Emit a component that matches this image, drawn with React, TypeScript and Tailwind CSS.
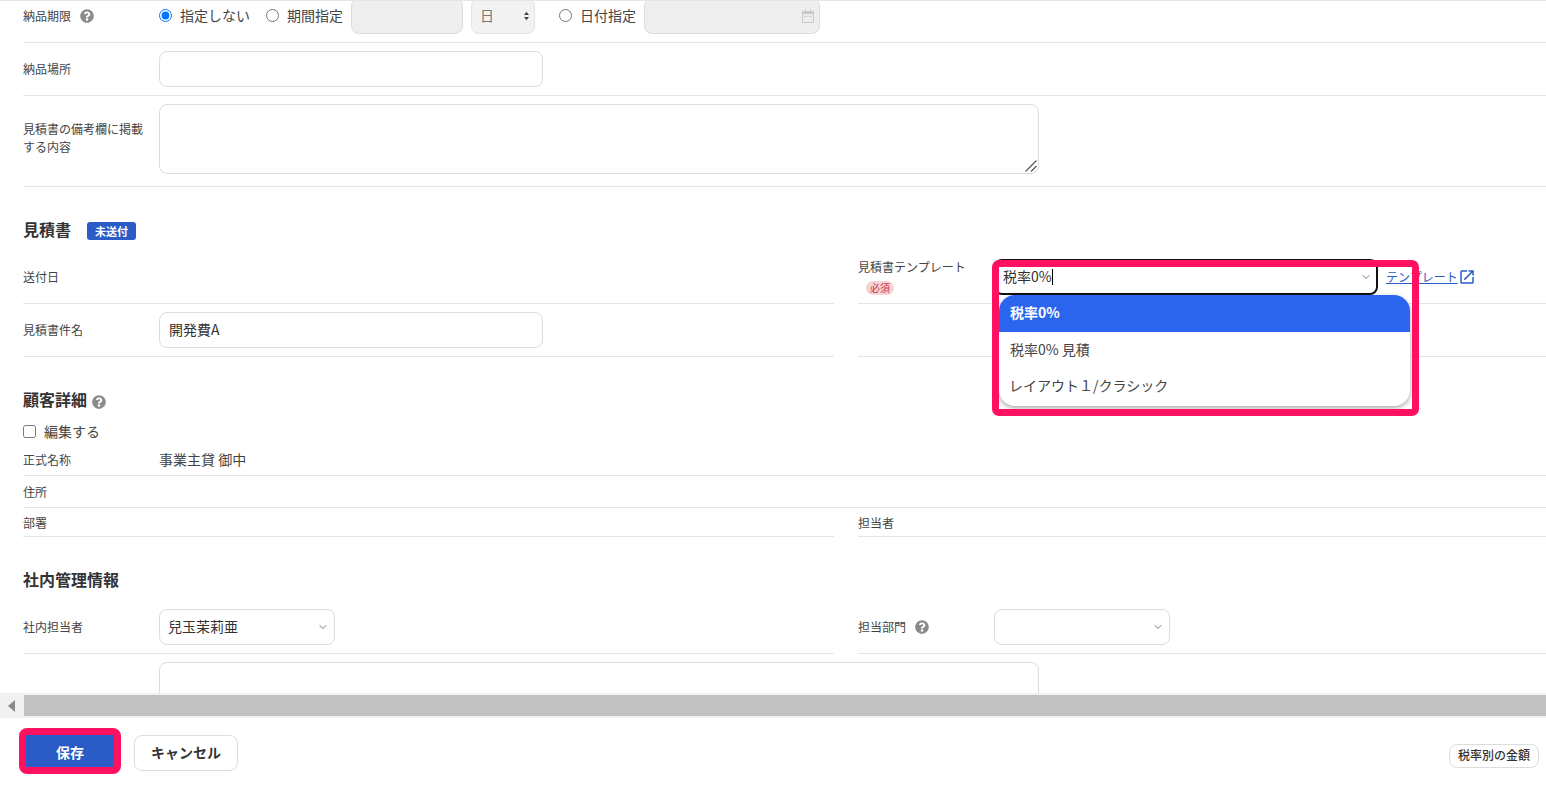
import { ChevronDown } from "lucide-react";
import { FaQuestionCircle } from "react-icons/fa";
import { MdOpenInNew } from "react-icons/md";

const Help = () => <FaQuestionCircle className="size-[14px] shrink-0 text-[#8a8a8a]" />;

const Label = ({ children }: { children: React.ReactNode }) => (
  <div className="w-[136px] shrink-0 text-xs leading-[18px] text-[#444]">{children}</div>
);

const Select = ({ value, width }: { value?: string; width: string }) => (
  <div className={`${width} flex h-9 items-center justify-between rounded-lg border border-[#ddd] bg-white pl-[8px] pr-[5px] text-sm text-[#333]`}>
    <span className="pb-[2px]">{value}</span>
    <ChevronDown className="size-3 text-[#777]" />
  </div>
);

const Radio = ({ checked, label, className }: { checked?: boolean; label: string; className?: string }) => (
  <label className={`flex items-center gap-2 text-sm text-[#444] ${className ?? ""}`}>
    <input type="radio" name="delivery" defaultChecked={checked} className="m-0 size-[13px] -translate-y-px" />
    <span className="pb-[3px]">{label}</span>
  </label>
);

const App = () => (
  <div className="flex h-[789px] w-[1546px] flex-col overflow-hidden bg-white font-['Noto_Sans_CJK_JP',sans-serif] text-[#333]">
    <div className="h-[693px] shrink-0 overflow-hidden border-t border-[#e5e5e5] pl-[23px]">
      <div className="flex h-[42px] items-end overflow-hidden border-b border-[#e5e5e5] pb-2">
        <div className="flex h-9 items-center">
          <div className="flex w-[136px] items-center gap-[9px] text-xs text-[#444]">
            納品期限 <Help />
          </div>
          <Radio checked label="指定しない" />
          <Radio label="期間指定" className="ml-4" />
          <div className="ml-2 h-9 w-[112px] rounded-lg border border-[#ddd] bg-[#efeeee]" />
          <div className="ml-2 flex h-9 w-16 items-center justify-between rounded-lg border border-[#e3e3e3] bg-[#f3f2f2] pl-[8px] pr-[5px] text-sm text-[#777]">
            <span className="pb-[2px]">日</span>
            <svg width="5" height="10" viewBox="0 0 6 11" className="text-[#444]">
              <path d="M3 0.5 6 4.2H0ZM3 10.5 0 6.8h6Z" fill="currentColor" />
            </svg>
          </div>
          <Radio label="日付指定" className="ml-6" />
          <div className="ml-2 flex h-9 w-[176px] items-center justify-end rounded-lg border border-[#ddd] bg-[#efeeee] pr-[5px]">
            <svg width="12" height="14" viewBox="0 0 12 14" className="text-[#c9c9c9]">
              <path d="M1 2h2V0.5h1V2h4V0.5h1V2h2a1 1 0 0 1 1 1v10a1 1 0 0 1-1 1H1a1 1 0 0 1-1-1V3a1 1 0 0 1 1-1Zm0 3v8h10V5Z" fill="currentColor" />
              <path d="M2.5 6.5h1.5V8H2.5ZM5.2 6.5h1.5V8H5.2ZM8 6.5h1.5V8H8Z" fill="currentColor" />
            </svg>
          </div>
        </div>
      </div>

      <div className="flex h-[53px] items-center border-b border-[#e5e5e5]">
        <Label>納品場所</Label>
        <input className="h-9 w-[384px] rounded-lg border border-[#ddd]" readOnly />
      </div>

      <div className="flex h-[91px] items-start border-b border-[#e5e5e5] pt-2">
        <div className="flex h-[68px] items-center">
          <Label>
            見積書の備考欄に掲載
            <br />
            する内容
          </Label>
        </div>
        <div className="relative h-[70px] w-[880px]">
          <textarea className="block h-[70px] w-[880px] resize-none rounded-lg border border-[#ddd]" readOnly />
          <svg width="12" height="12" viewBox="0 0 12 12" className="absolute bottom-[2px] right-[2px] text-[#555]">
            <path d="M0.5 11.5 11.5 0.5M6 11.5l5.5-5.5" stroke="currentColor" strokeWidth="1.2" fill="none" />
          </svg>
        </div>
      </div>

      <div className="flex h-[64px] items-center gap-4 pt-[19px]">
        <h2 className="text-base font-bold leading-6 text-[#333]">見積書</h2>
        <span className="mt-1 rounded-[3px] bg-[#2a5bc7] px-2 text-[11px] font-bold leading-[18px] text-white">未送付</span>
      </div>

      <div className="grid grid-cols-[811px_688px] gap-x-6">
        <div className="flex h-[53px] items-center border-b border-[#e5e5e5]">
          <Label>送付日</Label>
        </div>
        <div className="flex h-[53px] items-center border-b border-[#e5e5e5]">
          <div className="flex w-[136px] shrink-0 flex-col items-start gap-[5px] pb-[2px] text-xs text-[#444]">
            <span className="leading-[18px]">見積書テンプレート</span>
            <span className="ml-2 rounded-full bg-[#f9d2d7] px-1 text-[10px] leading-[14px] text-[#c0394b]">必須</span>
          </div>
          <div className="relative z-10 h-9 w-[384px] shrink-0">
            <div className="flex h-9 items-center justify-between rounded-lg border-2 border-[#111] bg-white pl-[7px] pr-1 text-sm text-[#333]">
              <span className="flex items-center pb-px">
                <span className="pb-px">税率0%</span>
                <span className="h-4 w-[1.5px] bg-black" />
              </span>
              <ChevronDown className="size-3 text-[#777]" />
            </div>
            <div className="absolute left-[5px] top-9 w-[411px] overflow-hidden rounded-2xl bg-white text-sm text-[#444] shadow-[0_2px_5px_rgba(0,0,0,0.35)]">
              <div className="flex h-[37px] items-center bg-[#2b65ee] px-[11px] pb-[3px] font-bold text-white">税率0%</div>
              <div className="flex h-[37px] items-center px-[11px] pb-[3px]">税率0% 見積</div>
              <div className="flex h-[37px] items-center px-[10px] pb-[5px]">レイアウト１/クラシック</div>
            </div>
            <div className="absolute left-[-2px] top-px h-[156px] w-[427px] rounded-[7px] border-[7px] border-[#ff1060]" />
          </div>
          <a className="ml-2 flex items-center text-xs text-[#2a5bc7]">
            <span className="underline">テンプレート</span>
            <MdOpenInNew className="size-[18px]" />
          </a>
        </div>
        <div className="flex h-[53px] items-center border-b border-[#e5e5e5]">
          <Label>見積書件名</Label>
          <div className="flex h-9 w-[384px] items-center rounded-lg border border-[#ddd] px-[9px] pb-[2px] text-sm text-[#333]">開発費A</div>
        </div>
        <div className="h-[53px] border-b border-[#e5e5e5]" />
      </div>

      <div className="flex h-[75px] items-end gap-[5px] pb-[21px]">
        <h2 className="text-base font-bold leading-6 text-[#333]">顧客詳細</h2>
        <span className="pb-[2px]">
          <Help />
        </span>
      </div>

      <label className="-mt-[13px] flex h-[26px] items-center gap-2 text-sm text-[#444]">
        <input type="checkbox" className="m-0 size-[13px] -translate-y-px" />
        <span className="pb-[2px]">編集する</span>
      </label>

      <div className="flex h-[31px] items-center border-b border-[#e5e5e5]">
        <Label>正式名称</Label>
        <span className="pb-[2px] text-sm text-[#444]">事業主貸 御中</span>
      </div>
      <div className="flex h-8 items-center border-b border-[#e5e5e5]">
        <Label>住所</Label>
      </div>
      <div className="grid grid-cols-[811px_688px] gap-x-6">
        <div className="flex h-[29px] items-center border-b border-[#e5e5e5] pt-px">
          <Label>部署</Label>
        </div>
        <div className="flex h-[29px] items-center border-b border-[#e5e5e5] pt-px">
          <Label>担当者</Label>
        </div>
      </div>

      <h2 className="flex h-[64px] items-end pb-[10px] text-base font-bold leading-6 text-[#333]">社内管理情報</h2>

      <div className="grid grid-cols-[811px_688px] gap-x-6">
        <div className="flex h-[53px] items-center border-b border-[#e5e5e5]">
          <Label>社内担当者</Label>
          <Select value="兒玉茉莉亜" width="w-[176px]" />
        </div>
        <div className="flex h-[53px] items-center border-b border-[#e5e5e5]">
          <div className="flex w-[136px] shrink-0 items-center gap-[9px] text-xs text-[#444]">
            担当部門 <Help />
          </div>
          <Select width="w-[176px]" />
        </div>
      </div>

      <div className="flex pt-2">
        <div className="w-[136px] shrink-0" />
        <div className="h-[70px] w-[880px] shrink-0 rounded-lg border border-[#ddd]" />
      </div>
    </div>

    <div className="flex h-[25px] shrink-0 items-stretch border-y-2 border-[#f1f1f1] bg-[#f1f1f1]">
      <div className="flex w-6 items-center justify-center pr-[2px]">
        <svg width="7" height="12" viewBox="0 0 7 12" className="text-[#8a8a8a]">
          <path d="M7 0v12L0 6Z" fill="currentColor" />
        </svg>
      </div>
      <div className="flex-1 bg-[#c1c1c1]" />
    </div>

    <div className="flex flex-1 items-start pl-[26px] pr-[7px] pt-[17px]">
      <div className="relative h-9 w-[89px]">
        <button className="h-9 w-[88px] bg-[#2a5bc7] pb-[2px] text-sm font-bold text-white">保存</button>
        <div className="absolute -left-[7px] -top-[7px] h-[46px] w-[102px] rounded-lg border-[7px] border-[#ff1060]" />
      </div>
      <button className="ml-[19px] h-9 w-[104px] rounded-lg border border-[#ddd] bg-white pb-[2px] text-sm font-bold text-[#333]">キャンセル</button>
      <button className="ml-auto mt-[9px] h-6 w-[90px] rounded-lg border border-[#ddd] bg-white pb-[2px] text-xs font-medium text-[#333]">税率別の金額</button>
    </div>
  </div>
);

export default App;
